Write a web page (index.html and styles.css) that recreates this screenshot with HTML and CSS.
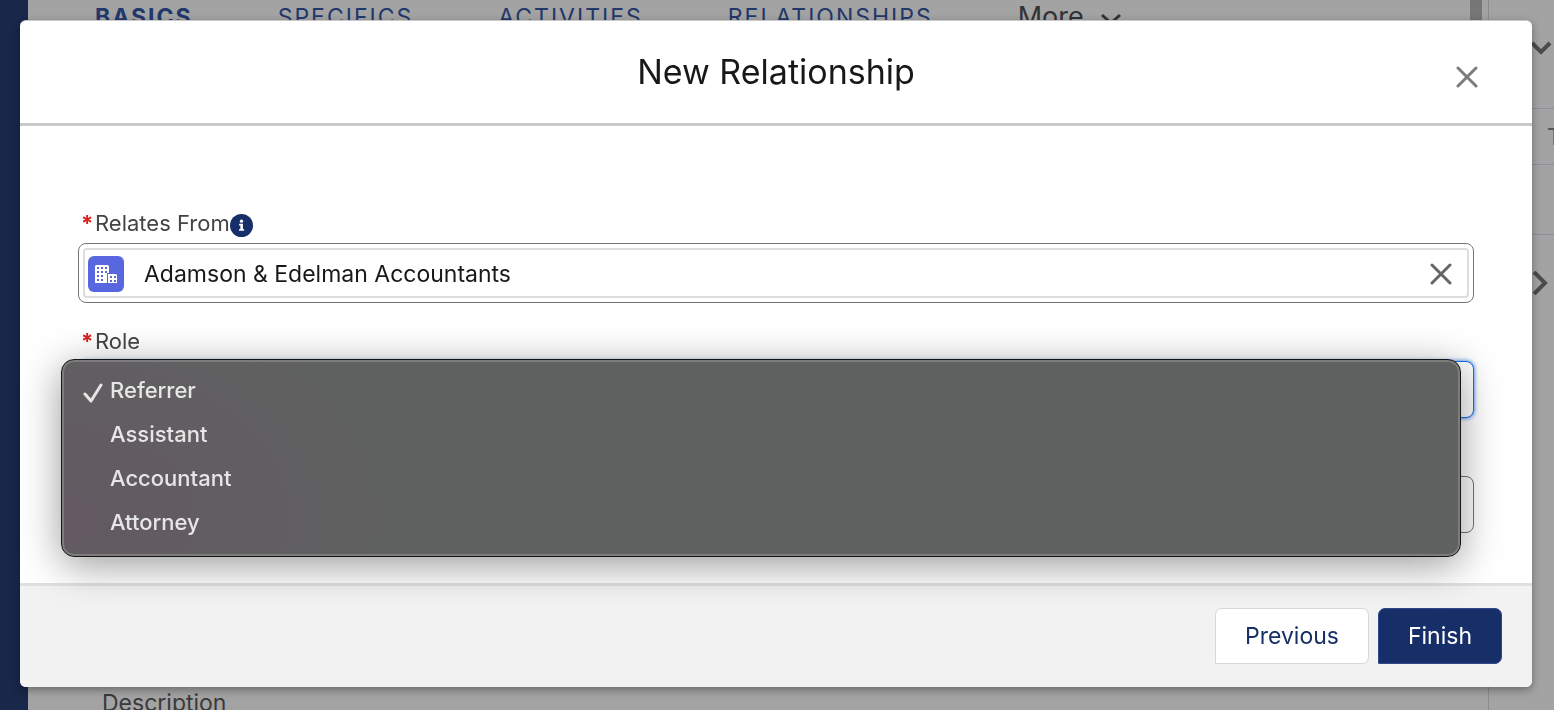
FILE: index.html
```
<!DOCTYPE html>
<html lang="en">
<head>
<meta charset="utf-8">
<title>New Relationship</title>
<link rel="stylesheet" href="styles.css">
</head>
<body>
<div class="page">
  <div class="rail"></div>
  <main class="record">
    <nav class="tabs">
      <a class="tab tab-active" href="#">BASICS</a>
      <a class="tab" href="#">SPECIFICS</a>
      <a class="tab" href="#">ACTIVITIES</a>
      <a class="tab" href="#">RELATIONSHIPS</a>
      <button class="more" type="button">More
        <svg class="more-icon" viewBox="0 0 22 14"><path d="M2 3l9 8 9-8"/></svg>
      </button>
    </nav>
    <div class="detail">Description</div>
  </main>
  <div class="track"><div class="thumb"></div></div>
  <aside class="side">
    <div class="side-row side-top"><svg class="chevron" viewBox="0 0 24 24"><path d="M3 7l9 9 9-9"/></svg></div>
    <div class="side-row side-text">T</div>
    <div class="side-row side-gap"></div>
    <div class="side-next"><svg class="chevron" viewBox="0 0 24 24"><path d="M3 1l11 11L3 23"/></svg></div>
  </aside>
</div>

<div class="overlay">
  <section class="modal" role="dialog" aria-labelledby="title">
    <header class="modal-header">
      <h1 class="title" id="title">New Relationship</h1>
      <button class="close" type="button" aria-label="Close"><svg class="cross cross-light" viewBox="0 0 22 22"><path d="M2 2l18 18M20 2L2 20"/></svg></button>
    </header>
    <form class="modal-body" id="form">
      <div class="field">
        <div class="label-row">
          <span class="star">*</span><label for="from">Relates From</label>
          <svg class="info" viewBox="0 0 24 24"><circle cx="12" cy="12" r="12" fill="#162f68"/><circle cx="12" cy="7.500" r="1.700" fill="#fff"/><path d="M9.500 10.200h4v5.600h1.300v1.700H9.400v-1.700h1.400v-3.900H9.500z" fill="#fff"/></svg>
        </div>
        <div class="lookup">
          <div class="pill">
            <svg class="account" viewBox="0 0 36 36"><rect width="36" height="36" rx="6" fill="#5867e0"/><path fill="#fff" d="M7 10.500q0-1.500 1.500-1.500h11q1.500 0 1.500 1.500V17h-2v10H7zM20 18h7.500q1.500 0 1.500 1.500V27h-9z"/><g fill="#5867e0"><path d="M9 11h2v2H9zM13 11h2v2h-2zM17 11h2v2h-2zM9 15h2v2H9zM13 15h2v2h-2zM17 15h2v2h-2zM9 19h2v2H9zM13 19h2v2h-2zM9 23h2v2H9zM13 23h2v2h-2zM22 20h2v2h-2zM26 20h2v2h-2zM22 24h2v2h-2zM26 24h2v2h-2z"/></g></svg>
            <input class="value" id="from" type="text" value="Adamson &amp; Edelman Accountants">
            <button class="clear" type="button" aria-label="Clear"><svg class="cross" viewBox="0 0 22 22"><path d="M2 2l18 18M20 2L2 20"/></svg></button>
          </div>
        </div>
      </div>
      <div class="field">
        <div class="label-row"><span class="star">*</span><label for="role">Role</label></div>
        <div class="control">
          <select class="box box-focus" id="role"></select>
          <ul class="menu" role="listbox" aria-label="Role">
            <li class="option" role="option" aria-selected="true"><svg class="check" viewBox="0 0 20 20"><path d="M2 11l6 7L18 2"/></svg>Referrer</li>
            <li class="option" role="option">Assistant</li>
            <li class="option" role="option">Accountant</li>
            <li class="option" role="option">Attorney</li>
          </ul>
        </div>
      </div>
      <div class="field">
        <div class="label-row"></div>
        <input class="box" type="text" aria-label="Relates To">
      </div>
    </form>
    <footer class="modal-footer">
      <button class="btn" type="button">Previous</button>
      <button class="btn btn-brand" type="submit" form="form">Finish</button>
    </footer>
  </section>
</div>
</body>
</html>
```
FILE: styles.css
```
* { box-sizing: border-box; }

body {
  margin: 0;
  font-family: Inter, "Liberation Sans", sans-serif;
  font-size: 23px;
  color: #181818;
}

button, input, select { font: inherit; color: inherit; }
button { padding: 0; border: 0; background: none; cursor: pointer; }
svg { display: block; flex: none; }

/* Record page behind the dialog */
.page {
  display: flex;
  height: 100vh;
  overflow: hidden;
  background: #a3a3a3;
}
.rail { width: 28px; background: #18274a; }
.record {
  flex: 1;
  display: flex;
  flex-direction: column;
  justify-content: space-between;
  min-width: 0;
}
.tabs {
  display: flex;
  align-items: center;
  gap: 85px;
  height: 34px;
  padding-left: 67px;
}
.tab {
  color: #22386b;
  letter-spacing: 2px;
  line-height: 32px;
  text-decoration: none;
}
.tab-active { font-weight: 700; }
.more {
  display: flex;
  align-items: center;
  gap: 16px;
  font-size: 27px;
  line-height: 36px;
  color: #333;
}
.more-icon { width: 22px; margin-top: 4px; fill: none; stroke: #333; stroke-width: 3; }
.detail { padding-left: 74px; height: 22px; line-height: 30px; color: #3a3a3a; }
.track { width: 18px; }
.thumb { width: 12px; height: 60%; background: #77777a; }
.side { width: 66px; border-left: 1px solid #8b8b8d; color: #555; }
.side-row { border-bottom: 1px solid #8b909b; }
.side-top { height: 109px; padding: 36px 0 0 40px; }
.side-text { height: 56px; padding-left: 58px; line-height: 56px; }
.side-gap { height: 70px; }
.side-next { padding: 36px 0 0 42px; }
.chevron { width: 24px; fill: none; stroke: #4b4b4b; stroke-width: 4; }

/* Dialog */
.overlay { position: fixed; inset: 0; padding: 20px 22px 0 20px; }
.modal {
  border-top: 1px solid #c9c9c9;
  border-radius: 6px;
  overflow: hidden;
  background: #fff;
  box-shadow: 0 3px 8px rgba(0, 0, 0, .35);
}
.modal-header {
  display: grid;
  grid-template-columns: 1fr auto 1fr;
  align-items: center;
  height: 105px;
  padding: 0 54px;
  border-bottom: 3px solid #c9c9c9;
}
.title {
  grid-column: 2;
  margin: 0;
  font-size: 34px;
  font-weight: 400;
  line-height: 48px;
}
.close { justify-self: end; margin-top: 10px; }
.cross { width: 22px; fill: none; stroke: #666; stroke-width: 3; stroke-linecap: round; }
.cross-light { stroke: #7b7b7b; }

.modal-body {
  display: flex;
  flex-direction: column;
  gap: 24px;
  padding: 83px 58px 50px;
}
.label-row {
  display: flex;
  align-items: center;
  height: 28px;
  margin-bottom: 6px;
  padding-left: 3px;
  font-size: 22px;
  color: #444;
}
.star { width: 14px; font-weight: 700; color: #d8221f; }
.info { width: 23px; margin-top: 4px; }

.lookup {
  padding: 4px;
  border: 1px solid #747474;
  border-radius: 8px;
}
.pill {
  display: flex;
  align-items: center;
  height: 50px;
  padding: 2px 15px 0 3px;
  border: 2px solid #ddd;
  border-radius: 4px;
}
.account { width: 36px; }
.value {
  flex: 1;
  min-width: 0;
  padding: 0 0 0 20px;
  border: 0;
  outline: 0;
  background: none;
}

.control { position: relative; }
.box {
  display: block;
  appearance: none;
  width: 100%;
  height: 57px;
  border: 1px solid #747474;
  border-radius: 8px;
  background: #fff;
}
.box-focus { border-color: #1b73e8; box-shadow: 0 0 4px #1b73e8; }

.menu {
  position: absolute;
  z-index: 1;
  top: -2px;
  left: -17px;
  right: 13px;
  margin: 0;
  padding: 8px 0 12px 48px;
  border: 1px solid #161616;
  border-radius: 13px;
  list-style: none;
  font-size: 22px;
  font-weight: 500;
  color: #e6e6e6;
  background: radial-gradient(ellipse 320px 220px at 0 80%, #635962, #606161);
  box-shadow: inset 0 0 0 2px #7c7c7c, 0 8px 40px rgba(0, 0, 0, .4);
}
.option { position: relative; height: 44px; line-height: 44px; }
.check {
  position: absolute;
  left: -27px;
  top: 15px;
  width: 20px;
  fill: none;
  stroke: #e6e6e6;
  stroke-width: 3;
  stroke-linecap: round;
  stroke-linejoin: round;
}

.modal-footer {
  display: flex;
  justify-content: flex-end;
  gap: 9px;
  padding: 22px 30px 23px;
  border-top: 3px solid #e0e0e0;
  background: #f2f2f2;
}
.btn {
  height: 56px;
  padding: 0 29px;
  border: 1px solid #d8d8d8;
  border-radius: 7px 7px 7px 1px;
  color: #183067;
  background: #fff;
}
.btn-brand { border-color: #2f4a8c; color: #fff; background: #162f68; }
```
